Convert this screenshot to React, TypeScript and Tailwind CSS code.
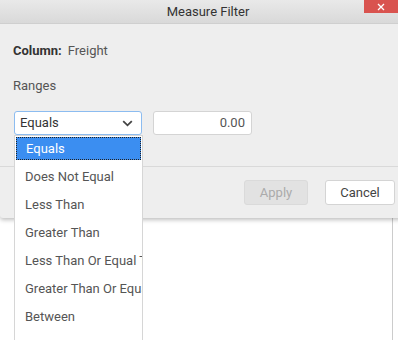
import React from "react";

const options = [
  "Equals",
  "Does Not Equal",
  "Less Than",
  "Greater Than",
  "Less Than Or Equal To",
  "Greater Than Or Equal To",
  "Between",
];

const App = () => {
  return (
    <div
      className="relative w-[398px] h-[340px] overflow-hidden bg-white text-[13px] text-[#333]"
      style={{ fontFamily: "Roboto, 'Liberation Sans', sans-serif" }}
    >
      {/* dialog */}
      <div className="relative z-10 w-[402px] h-[218px] bg-[#eeeeee] rounded-b-[3px] shadow-[0_2px_4px_rgba(0,0,0,0.25)] flex flex-col">
        <div className="relative h-[24px] shrink-0 border-b border-[#cfcfcf] bg-gradient-to-b from-[#e9e9e9] to-[#d9d9d9] flex items-center justify-center">
          <span className="text-[#333] text-[13px] pl-[14px]">Measure Filter</span>
          <div className="absolute top-0 left-[364px] w-[34px] h-[13px] bg-[#d9534f] flex items-center justify-center">
            <svg width="8" height="8" viewBox="0 0 8 8">
              <path d="M1 1L7 7M7 1L1 7" stroke="#fff" strokeWidth="1.3" />
            </svg>
          </div>
        </div>
        <div className="flex-1 px-[13px]">
          <div className="mt-[18px] flex items-center h-[17px]">
            <span className="font-bold text-[#333]">Column:</span>
            <span className="ml-[6px] text-[#555]">Freight</span>
          </div>
          <div className="mt-[18px] h-[17px] flex items-center text-[#555]">Ranges</div>
          <div className="mt-[17px] flex items-center gap-[11px]">
            <div className="ml-[1px] w-[128px] h-[24px] bg-white border border-[#8cbcf0] rounded-[3px] flex items-center justify-between pl-[5px] pr-[8px]">
              <span className="text-[#333]">Equals</span>
              <svg width="11" height="7" viewBox="0 0 11 7">
                <path d="M1.2 1.2L5.5 5.3L9.8 1.2" fill="none" stroke="#444" strokeWidth="1.8" />
              </svg>
            </div>
            <div className="w-[99px] h-[24px] bg-white border border-[#d4d4d4] rounded-[3px] flex items-center justify-end pr-[6px] text-[#555]">
              0.00
            </div>
          </div>
        </div>
        <div className="h-[52px] shrink-0 border-t border-[#d9d9d9] flex justify-end items-start pt-[13px] pr-[7px] gap-[17px]">
          <div className="w-[64px] h-[25px] rounded-[3px] bg-[#e2e2e2] border border-[#dadada] flex items-center justify-center text-[#ababab]">
            Apply
          </div>
          <div className="w-[70px] h-[25px] rounded-[3px] bg-white border border-[#d4d4d4] flex items-center justify-center text-[#444]">
            Cancel
          </div>
        </div>
      </div>

      {/* page behind */}
      <div className="w-[393px] h-[130px] border-r border-[#cccccc]" />

      {/* dropdown popup */}
      <div className="absolute z-20 left-[14px] top-[135px] w-[129px] h-[220px] bg-white border border-[#d6d6d6] overflow-hidden">
        {options.map((o, i) =>
          i === 0 ? (
            <div key={o} className="h-[27px] px-[1px] pt-[1px]">
              <div className="h-[23px] flex items-center pl-[9px] bg-[#3b8ef1] text-white border border-dotted border-[#222] whitespace-nowrap">
                {o}
              </div>
            </div>
          ) : (
            <div key={o} className="h-[28px] flex items-center pl-[10px] text-[#555] whitespace-nowrap">
              {o}
            </div>
          )
        )}
      </div>
    </div>
  );
};

export default App;
